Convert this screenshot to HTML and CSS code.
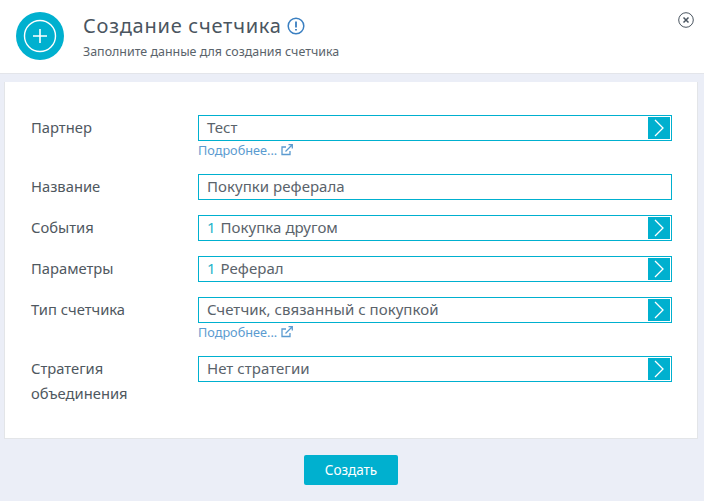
FILE: index.html
```html
<!DOCTYPE html>
<html lang="ru">
<head>
<meta charset="utf-8">
<title>Создание счетчика</title>
<link rel="stylesheet" href="styles.css">
</head>
<body>
<div class="page">
  <header class="header">
    <svg class="logo" width="48" height="48" viewBox="0 0 48 48"><circle cx="24" cy="24" r="24" fill="#00b0cf"/><circle cx="24" cy="24" r="15.500" fill="none" stroke="#fff" stroke-width="1.400"/><path d="M24 17V31M17 24H31" stroke="#fff" stroke-width="1.600"/></svg>
    <div class="titles">
      <div class="title-row">
        <h1 class="title">Создание счетчика</h1>
        <svg class="info" width="18" height="18" viewBox="0 0 18 18"><circle cx="9" cy="9" r="7.800" fill="none" stroke="#3a7fc1" stroke-width="1.500"/><path d="M9 4.500V10.500M9 12V13.500" stroke="#3a7fc1" stroke-width="1.800"/></svg>
      </div>
      <div class="subtitle">Заполните данные для создания счетчика</div>
    </div>
    <svg class="close" width="16" height="16" viewBox="0 0 16 16"><circle cx="8" cy="8" r="7.300" fill="none" stroke="#4a5560" stroke-width="1"/><path d="M5.500 5.500L10.500 10.500M10.500 5.500L5.500 10.500" stroke="#4a5560" stroke-width="1.500"/></svg>
  </header>
  <main class="card">
    <div class="row">
      <div class="label">Партнер</div>
      <div class="control">
        <div class="field"><span class="value">Тест</span><span class="arrow"><svg width="12" height="18" viewBox="0 0 12 18"><path d="M2 1L10 9L2 17" fill="none" stroke="#fff" stroke-width="1.300"/></svg></span></div>
        <a class="more">Подробнее... <svg width="12" height="12" viewBox="0 0 12 12"><path d="M9 7V10.500H1V3H5" fill="none" stroke="#5b9bd0" stroke-width="1.300"/><path d="M4.500 7.500L11 1M7.500 .7H11.300V4.500" fill="none" stroke="#5b9bd0" stroke-width="1.300"/></svg></a>
      </div>
    </div>
    <div class="row">
      <div class="label">Название</div>
      <div class="control"><div class="field"><span class="value">Покупки реферала</span></div></div>
    </div>
    <div class="row">
      <div class="label">События</div>
      <div class="control"><div class="field"><span class="value"><span class="count">1</span> Покупка другом</span><span class="arrow"><svg width="12" height="18" viewBox="0 0 12 18"><path d="M2 1L10 9L2 17" fill="none" stroke="#fff" stroke-width="1.300"/></svg></span></div></div>
    </div>
    <div class="row">
      <div class="label">Параметры</div>
      <div class="control"><div class="field"><span class="value"><span class="count">1</span> Реферал</span><span class="arrow"><svg width="12" height="18" viewBox="0 0 12 18"><path d="M2 1L10 9L2 17" fill="none" stroke="#fff" stroke-width="1.300"/></svg></span></div></div>
    </div>
    <div class="row">
      <div class="label">Тип счетчика</div>
      <div class="control">
        <div class="field"><span class="value">Счетчик, связанный с покупкой</span><span class="arrow"><svg width="12" height="18" viewBox="0 0 12 18"><path d="M2 1L10 9L2 17" fill="none" stroke="#fff" stroke-width="1.300"/></svg></span></div>
        <a class="more">Подробнее... <svg width="12" height="12" viewBox="0 0 12 12"><path d="M9 7V10.500H1V3H5" fill="none" stroke="#5b9bd0" stroke-width="1.300"/><path d="M4.500 7.500L11 1M7.500 .7H11.300V4.500" fill="none" stroke="#5b9bd0" stroke-width="1.300"/></svg></a>
      </div>
    </div>
    <div class="row">
      <div class="label">Стратегия<br>объединения</div>
      <div class="control"><div class="field"><span class="value">Нет стратегии</span><span class="arrow"><svg width="12" height="18" viewBox="0 0 12 18"><path d="M2 1L10 9L2 17" fill="none" stroke="#fff" stroke-width="1.300"/></svg></span></div></div>
    </div>
  </main>
  <footer class="footer"><button class="submit">Создать</button></footer>
</div>
</body>
</html>
```
FILE: styles.css
```css
* { box-sizing: border-box; }
html, body { margin: 0; padding: 0; }
body { background: #ebeef7; font-family: "Noto Sans", "Open Sans", sans-serif; color: #4f5860; }
.page { width: 704px; height: 501px; overflow: hidden; display: flex; flex-direction: column; }
.header { height: 74px; flex: none; background: #fff; border-bottom: 1px solid #e3e5ea; display: flex; align-items: flex-start; padding: 12px 10px 0 16px; }
.logo { flex: none; }
.titles { margin-left: 19px; flex: 1; }
.title-row { display: flex; align-items: center; gap: 5px; height: 28px; }
.title { margin: 0; font-size: 20px; font-weight: 400; color: #4a5560; letter-spacing: .75px; line-height: 28px; }
.info { flex: none; }
.subtitle { font-size: 12.450px; line-height: 16px; margin-top: 4px; color: #5a636b; }
.close { flex: none; }
.card { margin: 8px 6px 0 4px; height: 357px; background: #fff; border: 1px solid #e3e5e8; border-top: 0; padding: 33px 25px 0 26px; flex: none; }
.row { display: flex; margin-bottom: 15px; }
.label { width: 167px; flex: none; font-size: 14.750px; line-height: 24.500px; color: #4f5860; }
.control { width: 474px; flex: none; }
.field { height: 26px; border: 1px solid #00b0cf; display: flex; align-items: center; justify-content: space-between; padding: 0 1px 0 8px; }
.value { font-size: 15px; letter-spacing: .04px; line-height: 22px; color: #5a636b; position: relative; top: -1px; white-space: nowrap; }
.count { color: #1fb3c9; margin-right: 1px; }
.arrow { width: 22px; height: 22px; background: #00b0cf; display: flex; align-items: center; justify-content: center; flex: none; }
.more { display: flex; align-items: center; gap: 4px; font-size: 12.700px; line-height: 18px; color: #5b9bd0; }
.footer { flex: 1; display: flex; justify-content: center; padding: 16px 2px 0 0; }
.submit { width: 94px; height: 30px; background: #00b0cf; border: 0; border-radius: 2px; color: #fff; font-family: inherit; font-size: 13.500px; padding: 0; }
```
